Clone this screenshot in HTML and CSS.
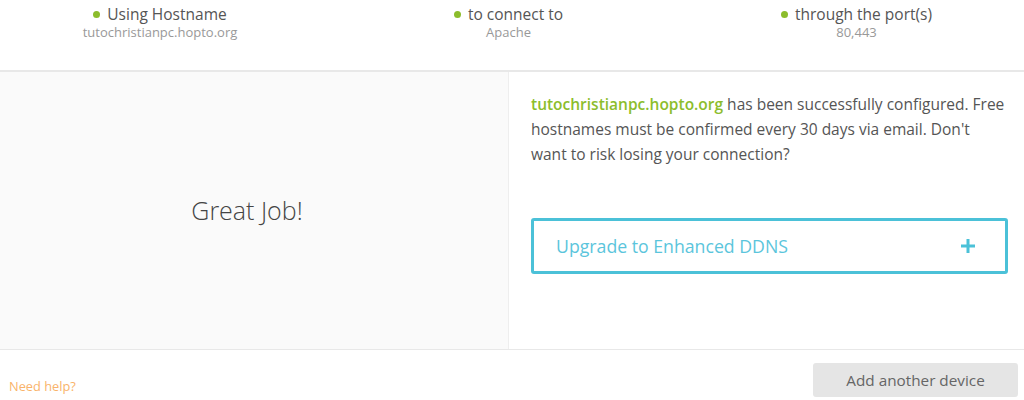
FILE: index.html
```html
<!DOCTYPE html>
<html>
<head>
<meta charset="utf-8">
<link rel="stylesheet" href="styles.css">
</head>
<body>
<div class="page">
  <header class="summary">
    <div class="step">
      <div class="step-title"><span class="dot"></span>Using Hostname</div>
      <div class="step-value">tutochristianpc.hopto.org</div>
    </div>
    <div class="step">
      <div class="step-title"><span class="dot"></span>to connect to</div>
      <div class="step-value">Apache</div>
    </div>
    <div class="step">
      <div class="step-title"><span class="dot"></span>through the port(s)</div>
      <div class="step-value">80,443</div>
    </div>
  </header>
  <main class="result">
    <section class="result-left">
      <h1 class="great">Great Job!</h1>
    </section>
    <section class="result-right">
      <p class="message"><span class="host">tutochristianpc.hopto.org</span> has been successfully configured. Free hostnames must be confirmed every 30 days via email. Don't want to risk losing your connection?</p>
      <div class="upgrade">
        <span class="upgrade-label">Upgrade to Enhanced DDNS</span>
        <svg class="plus" width="14" height="14" viewBox="0 0 14 14"><path d="M5.5 0h3v5.5H14v3H8.5V14h-3V8.5H0v-3h5.5z" fill="#4bc1d8"/></svg>
      </div>
    </section>
  </main>
  <footer class="footer">
    <a class="help">Need help?</a>
    <button class="add">Add another device</button>
  </footer>
</div>
</body>
</html>
```
FILE: styles.css
```css
* { box-sizing: border-box; }
html, body { margin: 0; padding: 0; background: #fff; }
body { font-family: "Open Sans", "Noto Sans", sans-serif; color: #555; width: 1024px; height: 400px; overflow: hidden; }
.page { display: flex; flex-direction: column; height: 400px; }

.summary {
  height: 72px;
  display: grid;
  grid-template-columns: 320px 377px 319px;
  border-bottom: 2px solid #e8e8e8;
  padding-top: 4px;
}
.step { display: flex; flex-direction: column; align-items: center; }
.step-title { font-size: 15.5px; line-height: 20px; color: #555; display: flex; align-items: center; }
.dot { width: 7px; height: 7px; border-radius: 50%; background: #8cbd2c; margin-right: 7px; }
.step-value { font-size: 13px; line-height: 17px; color: #999; }

.result { display: flex; height: 278px; border-bottom: 1px solid #e8e8e8; }
.result-left {
  width: 509px; background: #fafafa; border-right: 1px solid #eeeeee;
  display: flex; align-items: center; justify-content: center;
  padding-right: 14px;
}
.great { font-size: 25px; font-weight: 300; color: #444; margin: 0 0 2px 0; }
.result-right { flex: 1; padding: 20px 16px 0 22px; }
.message { margin: 0 1px 0 0; font-size: 15.5px; line-height: 25px; color: #555; }
.host { color: #8cbd2c; font-weight: 600; }
.upgrade {
  margin-top: 51px;
  height: 56px;
  border: 3px solid #4bc1d8;
  border-radius: 3px;
  display: flex; align-items: center; justify-content: space-between;
  padding: 0 30px 0 22px;
}
.upgrade-label { font-size: 17.7px; color: #5bc5dc; }
.plus { display: block; }

.footer { flex: 1; display: flex; align-items: center; justify-content: space-between; padding: 0 6px 0 9px; }
.help { font-size: 12.8px; color: #f9b36a; margin-top: 22px; }
.add {
  width: 205px; height: 34px; border: none; border-radius: 3px;
  background: #e5e5e5; color: #666; font-family: inherit; font-size: 15.3px;
  margin-top: 9px;
}
```
